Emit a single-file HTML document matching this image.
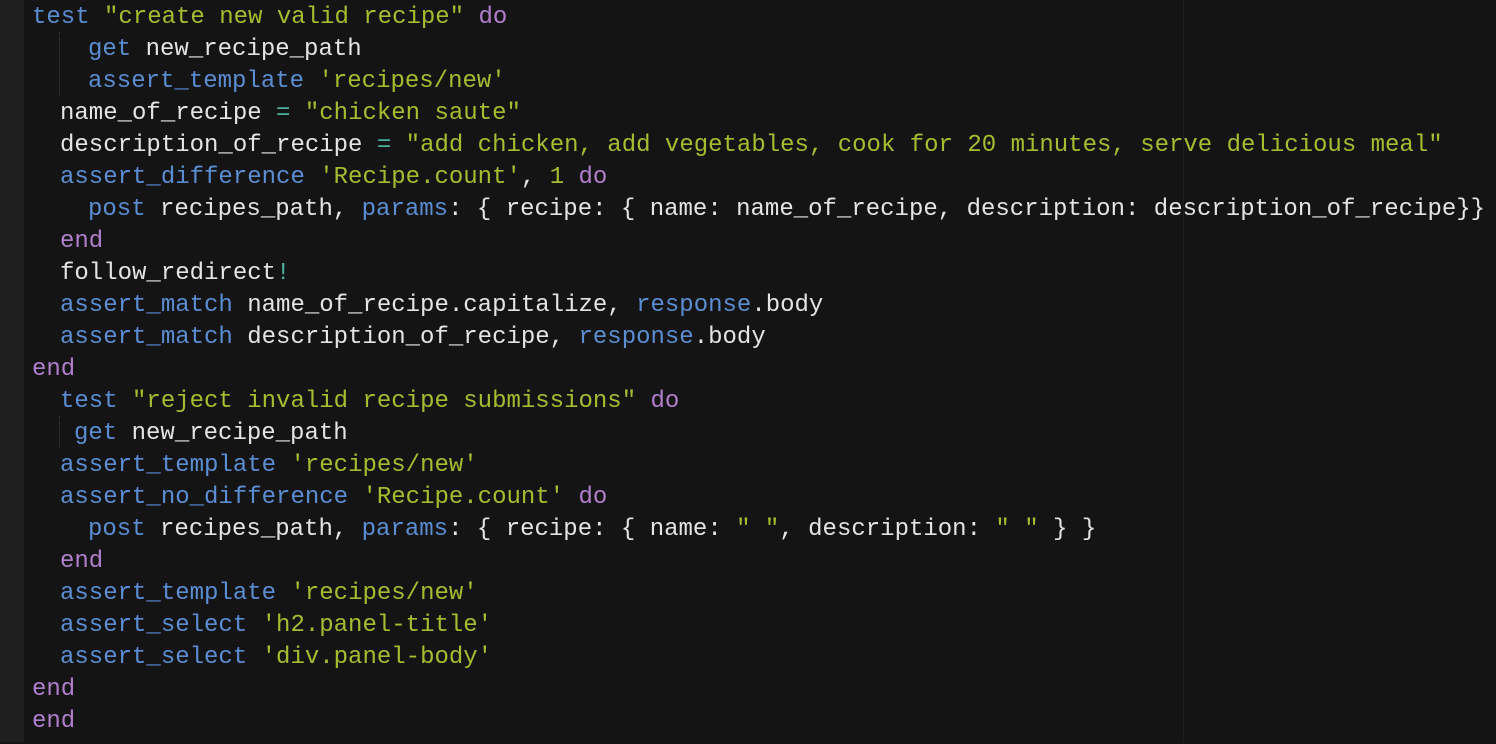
<!DOCTYPE html>
<html><head><meta charset="utf-8"><style>
html,body{margin:0;padding:0;}
body{width:1496px;height:742px;background:#141414;position:relative;overflow:hidden;font-family:"Liberation Mono",monospace;font-size:24px;color:#e4e4e4;}
.g{position:absolute;left:0;top:0;width:24px;height:742px;background:#1f1f1f;}
.r{position:absolute;left:1183px;top:0;width:1px;height:742px;background:#1e1e1e;}
.ig{position:absolute;left:59px;width:0;border-left:1px dotted #3a3a3a;}
.w{position:absolute;left:0;top:2px;width:1496px;height:742px;}
.l{position:absolute;height:32px;line-height:32px;white-space:pre;}
.b{color:#5b8dd3}.s{color:#a5bd2f}.p{color:#b07fcc}.t{color:#4bb39b}
</style></head><body>
<div class="g"></div><div class="r"></div>
<div class="ig" style="top:32px;height:64px"></div>
<div class="ig" style="top:416px;height:32px"></div>
<div class="w">
<div class="l" style="top:0;left:32px"><span class="b">test</span> <span class="s">"create new valid recipe"</span> <span class="p">do</span></div>
<div class="l" style="top:32px;left:88px"><span class="b">get</span> new_recipe_path</div>
<div class="l" style="top:64px;left:88px"><span class="b">assert_template</span> <span class="s">'recipes/new'</span></div>
<div class="l" style="top:96px;left:60px">name_of_recipe <span class="t">=</span> <span class="s">"chicken saute"</span></div>
<div class="l" style="top:128px;left:60px">description_of_recipe <span class="t">=</span> <span class="s">"add chicken, add vegetables, cook for 20 minutes, serve delicious meal"</span></div>
<div class="l" style="top:160px;left:60px"><span class="b">assert_difference</span> <span class="s">'Recipe.count'</span>, <span class="s">1</span> <span class="p">do</span></div>
<div class="l" style="top:192px;left:88px"><span class="b">post</span> recipes_path, <span class="b">params</span>: { recipe: { name: name_of_recipe, description: description_of_recipe}}</div>
<div class="l" style="top:224px;left:60px"><span class="p">end</span></div>
<div class="l" style="top:256px;left:60px">follow_redirect<span class="t">!</span></div>
<div class="l" style="top:288px;left:60px"><span class="b">assert_match</span> name_of_recipe.capitalize, <span class="b">response</span>.body</div>
<div class="l" style="top:320px;left:60px"><span class="b">assert_match</span> description_of_recipe, <span class="b">response</span>.body</div>
<div class="l" style="top:352px;left:32px"><span class="p">end</span></div>
<div class="l" style="top:384px;left:60px"><span class="b">test</span> <span class="s">"reject invalid recipe submissions"</span> <span class="p">do</span></div>
<div class="l" style="top:416px;left:74px"><span class="b">get</span> new_recipe_path</div>
<div class="l" style="top:448px;left:60px"><span class="b">assert_template</span> <span class="s">'recipes/new'</span></div>
<div class="l" style="top:480px;left:60px"><span class="b">assert_no_difference</span> <span class="s">'Recipe.count'</span> <span class="p">do</span></div>
<div class="l" style="top:512px;left:88px"><span class="b">post</span> recipes_path, <span class="b">params</span>: { recipe: { name: <span class="s">" "</span>, description: <span class="s">" "</span> } }</div>
<div class="l" style="top:544px;left:60px"><span class="p">end</span></div>
<div class="l" style="top:576px;left:60px"><span class="b">assert_template</span> <span class="s">'recipes/new'</span></div>
<div class="l" style="top:608px;left:60px"><span class="b">assert_select</span> <span class="s">'h2.panel-title'</span></div>
<div class="l" style="top:640px;left:60px"><span class="b">assert_select</span> <span class="s">'div.panel-body'</span></div>
<div class="l" style="top:672px;left:32px"><span class="p">end</span></div>
<div class="l" style="top:704px;left:32px"><span class="p">end</span></div>
</div>
</body></html>
